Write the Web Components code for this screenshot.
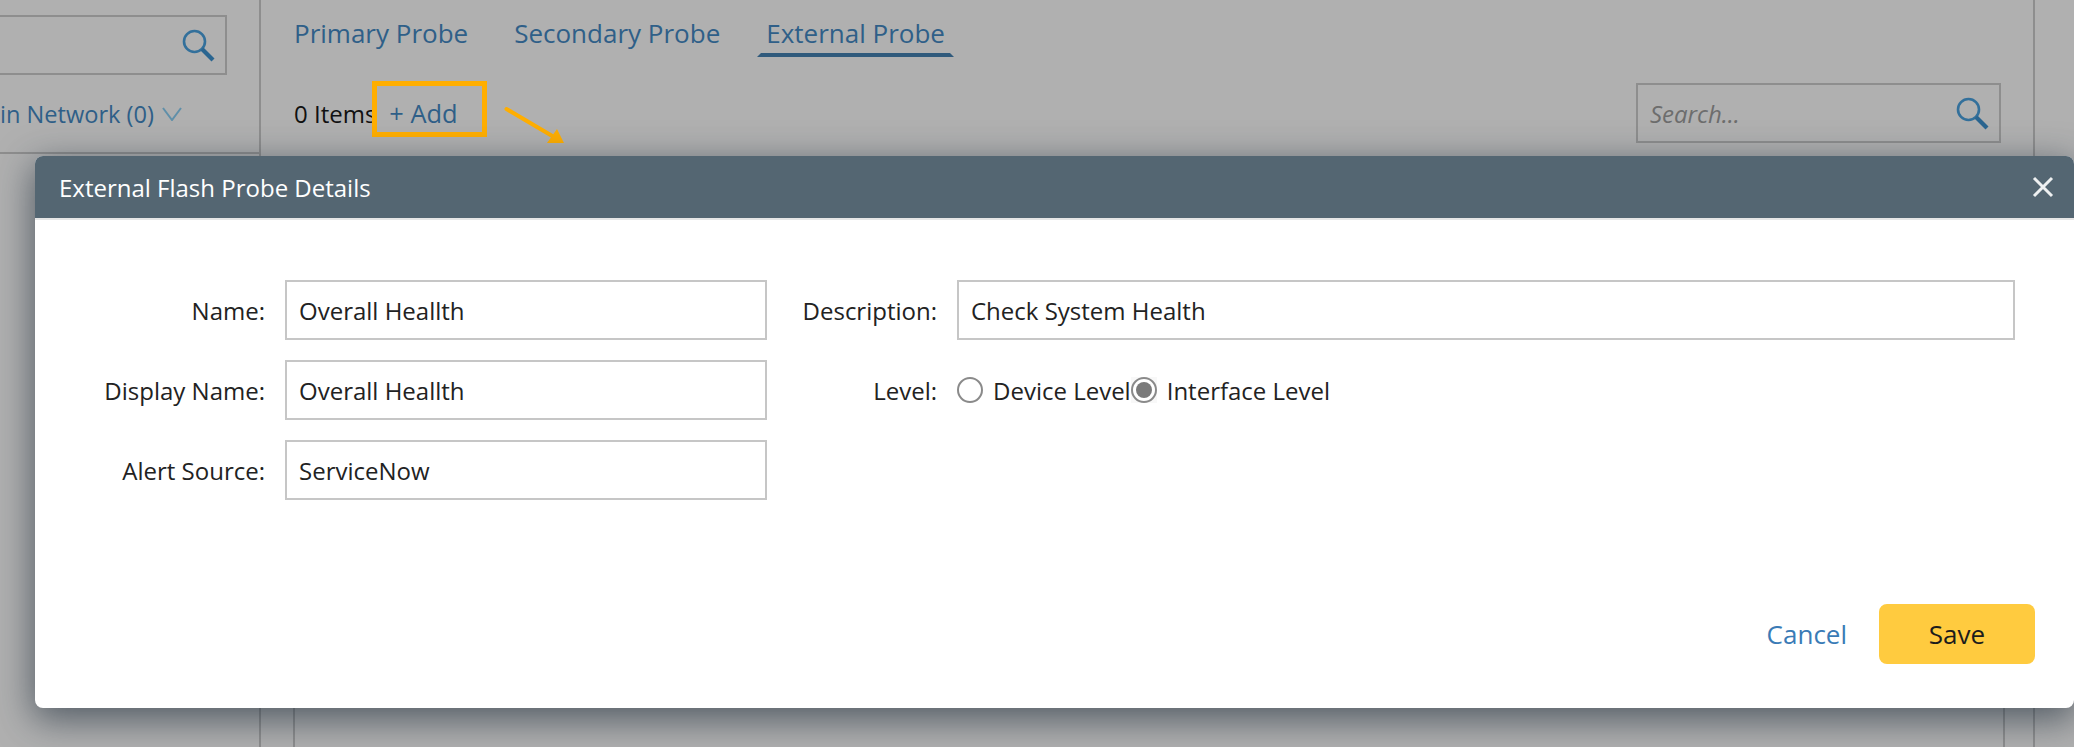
<!DOCTYPE html>
<html lang="en"><head><meta charset="utf-8"><title>External Flash Probe Details</title>
<style>
html,body{margin:0;padding:0;height:100%;overflow:hidden;background:#b0b0b0;font-family:"Open Sans","Noto Sans",sans-serif;}
</style></head><body>
<probe-page></probe-page>
<script>
const SEARCH_ICON=`<svg viewBox="0 0 33 33" width="33" height="33" aria-hidden="true"><circle cx="12.5" cy="12.5" r="10.5" fill="none" stroke="#33709b" stroke-width="2.6"/><path d="M20 20 L31 31" stroke="#2a6590" stroke-width="4.2" stroke-linecap="butt"/></svg>`;
function def(name,css,html){
  customElements.define(name,class extends HTMLElement{
    constructor(){super();const r=this.attachShadow({mode:"open"});r.innerHTML=`<style>${css}</style>`+html;}
  });
}
def("search-box",`
  :host{display:flex;box-sizing:border-box;align-items:center;justify-content:space-between;border:2px solid #8e8e8e;height:60px;padding:0 10px 0 12px;}
  span{font:italic 24px "Open Sans",sans-serif;color:#6d6d6d;}
  svg{display:block}
`,`<span><slot></slot></span>${SEARCH_ICON}`);
def("tab-link",`
  :host{display:block;font-size:26px;line-height:36px;color:#2f5f88;padding:0 5px 2px;border-bottom:4px solid transparent;border-left:4px solid transparent;border-right:4px solid transparent;}
  :host([active]){border-bottom-color:#305a7c;}
`,`<slot></slot>`);
def("form-field",`
  :host{display:grid;grid-template-columns:var(--label-w) 1fr;column-gap:var(--gap);align-items:center;height:60px;}
  label{font-size:24px;text-align:right;color:#222;}
  div{box-sizing:border-box;height:60px;border:2px solid #c6c6c6;padding:0 12px;font-size:24px;line-height:58px;color:#222;white-space:nowrap;}
`,`<label><slot name="label"></slot></label><div><slot></slot></div>`);
def("radio-opt",`
  :host{display:inline-flex;align-items:center;font-size:24px;color:#222;gap:10px;}
  b{display:block;}
  :host([checked]) b{background:#f8f8f8;}
  i{box-sizing:border-box;display:block;width:26px;height:26px;border-radius:50%;border:2px solid #8a8a8a;background:#fff;position:relative;}
  :host([checked]) i::after{content:"";position:absolute;inset:3px;border-radius:50%;background:#7a7a7a;}
`,`<b><i></i></b><span><slot></slot></span>`);
def("probe-dialog",`
  :host{display:flex;flex-direction:column;position:absolute;left:35px;right:0;top:156px;height:552px;background:#fff;border-radius:8px;box-shadow:0 10px 36px 2px rgba(28,42,56,.62);}
  header{display:flex;align-items:center;justify-content:space-between;height:62px;box-sizing:border-box;background:#546672;color:#fff;font-size:24px;padding:0 20px 0 24px;border-radius:8px 8px 0 0;box-shadow:0 2px 0 #e6e6e6;}
  svg{display:block}
  main{flex:1;display:grid;grid-template-columns:722px 1fr;padding:62px 59px 0 0;}
  .col{display:flex;flex-direction:column;gap:20px;}
  .a{--label-w:230px;--gap:20px;width:732px;}
  .b{--label-w:180px;--gap:20px;}
  .lvl{display:grid;grid-template-columns:180px 1fr;column-gap:20px;align-items:center;height:60px;font-size:24px;color:#222;}
  .lvl label{text-align:right}
  .radios{display:flex;align-items:center;}
  footer{display:flex;justify-content:flex-end;align-items:center;padding:0 39px 44px 0;gap:32px;}
  .cancel{font-size:26px;color:#3a7bb6;}
  .save{box-sizing:border-box;width:156px;height:60px;border-radius:8px;background:#ffcb3f;color:#1c1c1c;font-size:26px;display:flex;align-items:center;justify-content:center;}
`,`<header><span>External Flash Probe Details</span><svg width="22" height="22" viewBox="0 0 22 22"><path d="M2 2 L20 20 M20 2 L2 20" stroke="#eef0f1" stroke-width="3"/></svg></header>
<main>
  <div class="col a">
    <form-field><span slot="label">Name:</span>Overall Heallth</form-field>
    <form-field><span slot="label">Display Name:</span>Overall Heallth</form-field>
    <form-field><span slot="label">Alert Source:</span>ServiceNow</form-field>
  </div>
  <div class="col b">
    <form-field><span slot="label">Description:</span>Check System Health</form-field>
    <div class="lvl"><label>Level:</label><div class="radios"><radio-opt>Device Level</radio-opt><radio-opt checked>Interface Level</radio-opt></div></div>
  </div>
</main>
<footer><span class="cancel">Cancel</span><span class="save">Save</span></footer>`);
def("probe-page",`
  :host{display:grid;grid-template-columns:261px 1fr;height:747px;position:relative;overflow:hidden;background:#b0b0b0;}
  .side{box-sizing:border-box;border-right:2px solid #8e8e8e;}
  .side-top{box-sizing:border-box;height:154px;border-bottom:2px solid #8e8e8e;padding:15px 32px 0 0;display:flex;flex-direction:column;align-items:flex-end;}
  .side-top search-box{width:227px;border-left:0;}
  .net{display:flex;align-items:center;gap:8px;font-size:23.6px;color:#2f5f88;white-space:nowrap;margin-top:21px;line-height:36px;padding-right:45px;}
  .main{box-sizing:border-box;display:flex;flex-direction:column;padding:0 28px 0 32px;border-right:2px solid #8e8e8e;margin-right:39px;}
  .tabs{display:flex;gap:28px;padding-top:15px;margin-left:-8px;}
  .tools{display:flex;align-items:center;justify-content:space-between;height:60px;margin:26px 4px 0 1px;}
  .count{display:flex;align-items:center;font-size:24px;color:#111;white-space:nowrap;}
  .add{position:relative;margin-left:13px;color:#2f5f88;font-size:25.4px;line-height:36px;}
  .add::before{content:"";position:absolute;left:-17px;right:-29px;top:-14px;bottom:-6px;border:5.5px solid #ffae00;}
  .arrow{position:absolute;left:500px;top:100px;}
  .tools search-box{width:365px;}
  .table{margin-top:30px;flex:1;border:2px solid #8e8e8e;border-top:0;border-bottom:0;}
`,`<div class="side"><div class="side-top"><search-box></search-box><div class="net"><span>in Network (0)</span><svg width="20" height="14" viewBox="0 0 20 14"><path d="M1 1 L10 13 L19 1" fill="none" stroke="#5f8fa9" stroke-width="2"/></svg></div></div></div>
<div class="main">
  <div class="tabs"><tab-link>Primary Probe</tab-link><tab-link>Secondary Probe</tab-link><tab-link active>External Probe</tab-link></div>
  <div class="tools"><div class="count">0 Items<span class="add">+ Add</span></div><search-box>Search...</search-box></div>
  <div class="table"></div>
</div>
<svg class="arrow" width="70" height="50" viewBox="0 0 70 50"><path d="M6.5 9 L54 37" stroke="#ffae00" stroke-width="4" stroke-linecap="round"/><path d="M64 43 L47 43 L57 29 Z" fill="#ffae00"/></svg>
<probe-dialog></probe-dialog>`);
</script>
</body></html>
